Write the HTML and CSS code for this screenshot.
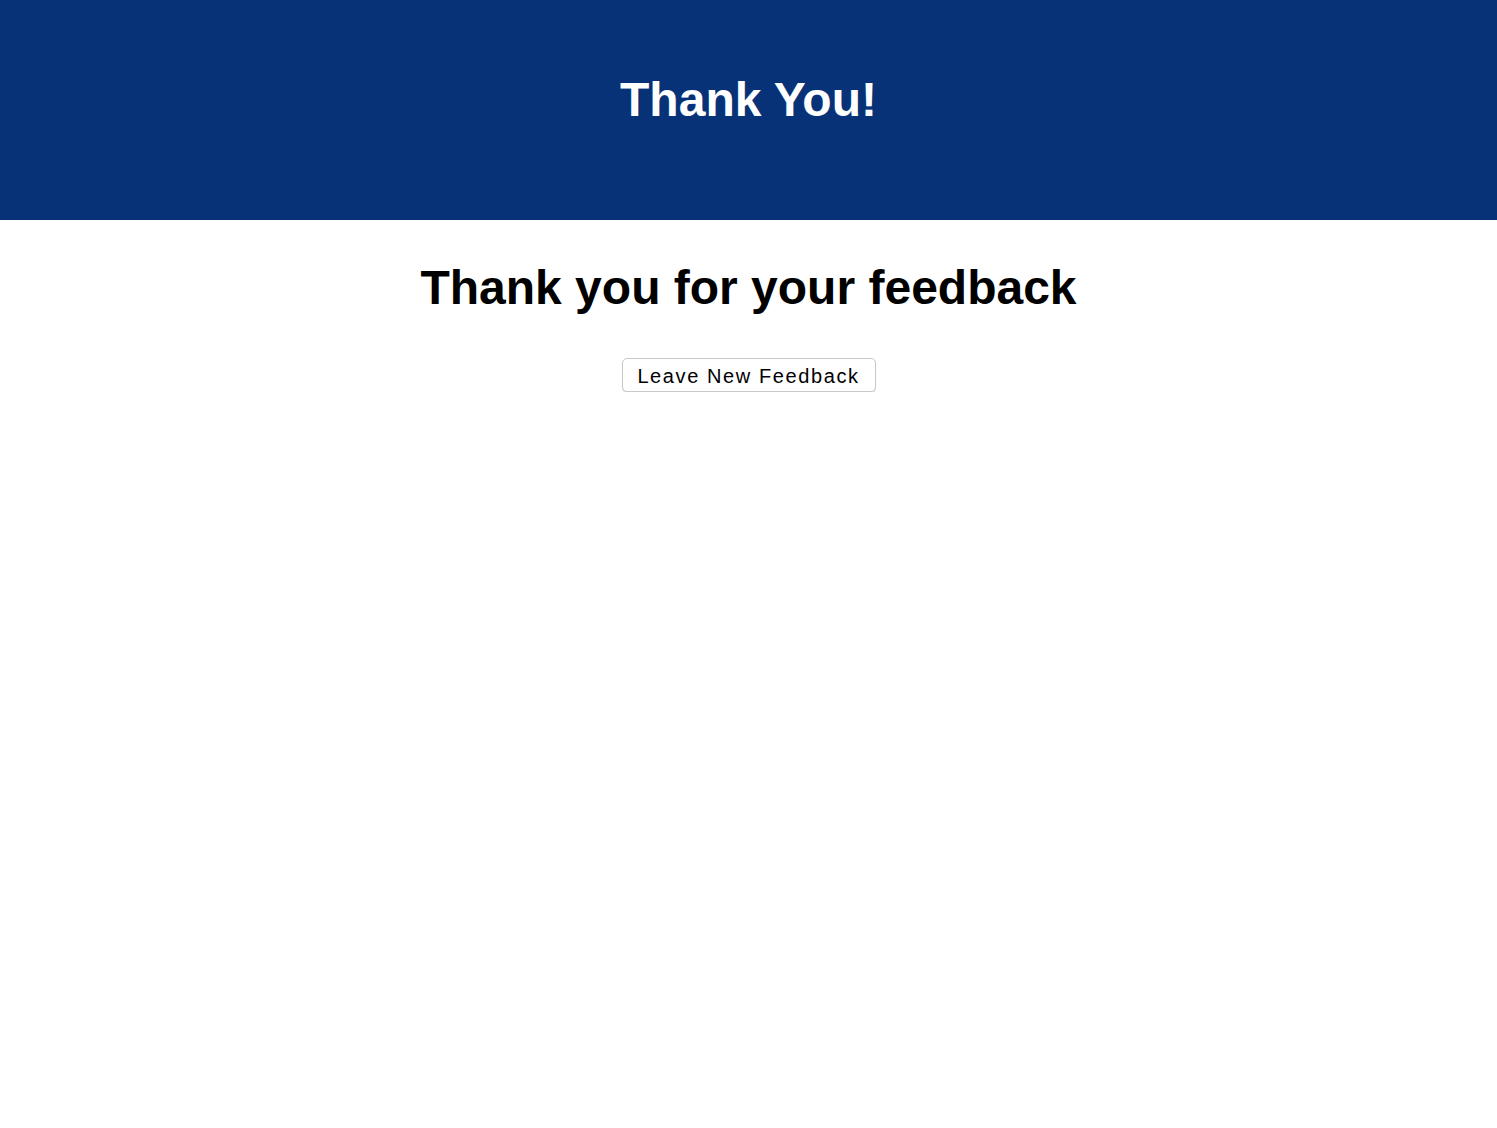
FILE: index.html
```html
<!DOCTYPE html>
<html lang="en">
<head>
<meta charset="utf-8">
<title>Thank You!</title>
<link rel="stylesheet" href="styles.css">
</head>
<body>
<header class="banner">
  <h1 class="banner-title">Thank You!</h1>
</header>
<main class="content">
  <h2 class="message">Thank you for your feedback</h2>
  <button class="btn" type="button">Leave New Feedback</button>
</main>
</body>
</html>
```
FILE: styles.css
```css
html, body {
  margin: 0;
  padding: 0;
  background: #ffffff;
}

body {
  font-family: "Liberation Sans", Arial, sans-serif;
  color: #000;
}

.banner {
  background: #073277;
  height: 220px;
  box-sizing: border-box;
  padding-top: 72px;
  text-align: center;
}

.banner-title {
  margin: 0;
  color: #ffffff;
  font-size: 48px;
  font-weight: bold;
  line-height: 55px;
}

.content {
  display: flex;
  flex-direction: column;
  align-items: center;
}

.message {
  margin: 40px 0 0;
  font-size: 48px;
  font-weight: bold;
  line-height: 55px;
}

.btn {
  margin-top: 43px;
  width: 254px;
  height: 34px;
  padding: 2px 0 0;
  background: #ffffff;
  border: 1px solid #c8c8c8;
  border-radius: 5px;
  box-shadow: 0 1px 1px rgba(0, 0, 0, 0.15);
  font-family: "Liberation Sans", Arial, sans-serif;
  font-size: 20px;
  letter-spacing: 1.6px;
  color: #000;
  line-height: 30px;
  box-sizing: border-box;
}
```
